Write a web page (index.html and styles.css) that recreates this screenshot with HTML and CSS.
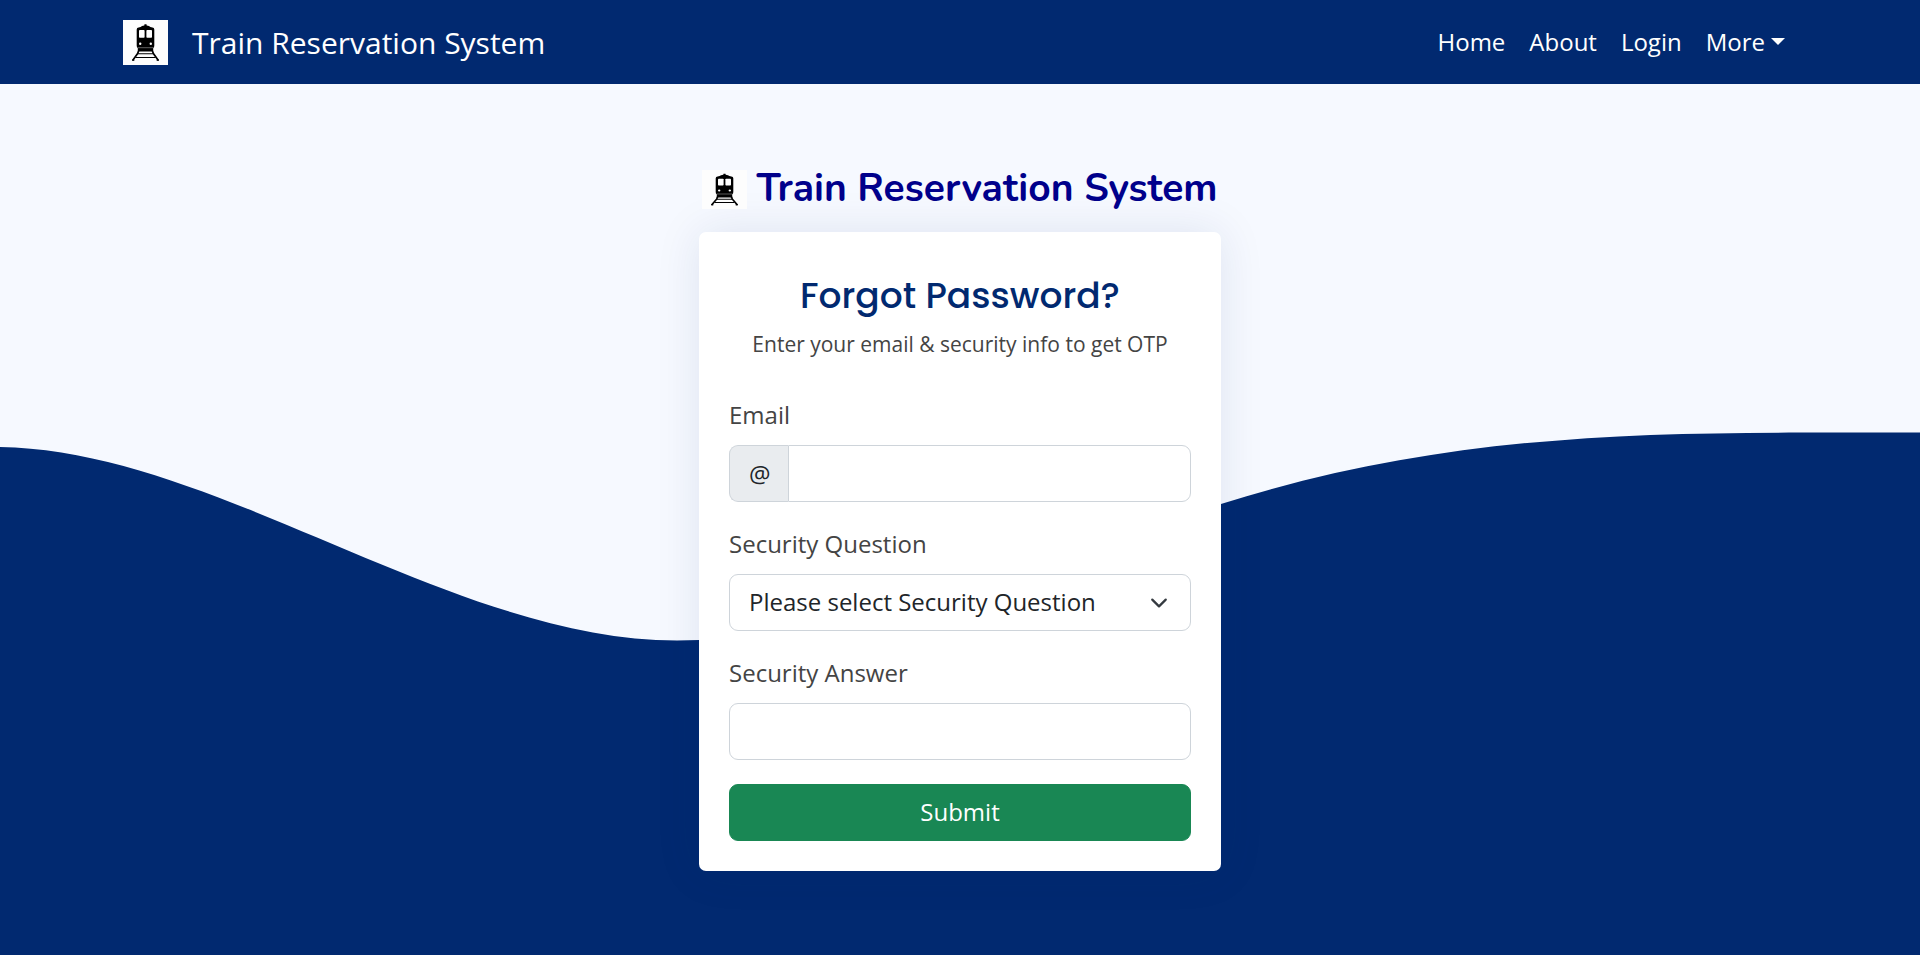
FILE: index.html
```html
<!DOCTYPE html>
<html lang="en">
<head>
  <meta charset="utf-8">
  <meta name="viewport" content="width=device-width, initial-scale=1">
  <title>Train Reservation System</title>
  <link rel="stylesheet" href="styles.css">
</head>
<body>
  <svg class="symbols" aria-hidden="true">
    <symbol id="train" viewBox="0 0 45 45" preserveAspectRatio="none">
      <rect width="45" height="45" fill="#fdfdfd"/>
      <path d="M13.7 9.5 Q13.7 7.8 15.6 7.6 L17.6 7 Q18.6 5.6 21.3 5.4 L21.5 4.3 H23.5 L23.7 5.4 Q26.4 5.6 27.4 7 L29.4 7.6 Q31.3 7.8 31.3 9.5 V25.5 Q31.3 27.6 30.2 28 V31.6 H14.8 V28 Q13.7 27.6 13.7 25.5 Z" fill="#000"/>
      <rect x="16" y="10" width="5.6" height="7.8" rx=".8" fill="#fff"/>
      <rect x="23.4" y="10" width="5.6" height="7.8" rx=".8" fill="#fff"/>
      <circle cx="17.2" cy="23.7" r="1.2" fill="#fff"/>
      <circle cx="27.8" cy="23.7" r="1.2" fill="#fff"/>
      <path d="M14.8 27.7 H30.2" stroke="#777" stroke-width=".8"/>
      <path d="M15.6 31 L14.6 33.6 L9.6 40.4 M29.4 31 L30.4 33.6 L35.4 40.4" fill="none" stroke="#000" stroke-width="1.7"/>
      <path d="M9 40.2 H11.4 M33.6 40.2 H36" stroke="#000" stroke-width="1"/>
      <path d="M15 33.8 H30 M12.5 37.5 H32.5" stroke="#000" stroke-width="1.1"/>
    </symbol>
  </svg>

  <header class="navbar">
    <div class="navbar-inner">
      <a class="brand" href="#">
        <svg class="brand-logo" role="img" aria-label="Train"><use href="#train"/></svg>
        <span>Train Reservation System</span>
      </a>
      <nav class="nav">
        <a href="#">Home</a>
        <a href="#">About</a>
        <a href="#">Login</a>
        <button class="nav-more" type="button" aria-haspopup="true">More<span class="caret"></span></button>
      </nav>
    </div>
  </header>

  <main class="page">
    <svg class="wave" viewBox="0 0 1920 871" preserveAspectRatio="none" aria-hidden="true">
      <path d="M0 363 C215 366 452 556.5 677 556.5 C880 556.5 1020 482 1221 420 C1421 357 1600 348.6 1800 348.6 H1920 V871 H0 Z"/>
    </svg>
    <div class="content">
      <a class="logo" href="#">
        <svg class="logo-icon" role="img" aria-label="Train"><use href="#train"/></svg>
        <span>Train Reservation System</span>
      </a>
      <section class="card">
        <h1 class="card-title">Forgot Password?</h1>
        <p class="card-text">Enter your email &amp; security info to get OTP</p>
        <form class="form">
          <div class="field">
            <label for="email">Email</label>
            <div class="input-group">
              <span class="addon">@</span>
              <input class="control" type="email" id="email">
            </div>
          </div>
          <div class="field">
            <label for="question">Security Question</label>
            <select class="control select" id="question">
              <option>Please select Security Question</option>
            </select>
          </div>
          <div class="field">
            <label for="answer">Security Answer</label>
            <input class="control" type="text" id="answer">
          </div>
          <button class="submit" type="submit">Submit</button>
        </form>
      </section>
    </div>
  </main>
</body>
</html>
```
FILE: styles.css
```css
* {
  box-sizing: border-box;
}

body {
  margin: 0;
  min-height: 100vh;
  display: flex;
  flex-direction: column;
  background: #f6f9ff;
  color: #444;
  font-family: "Open Sans", sans-serif;
  font-size: 24px;
}

a {
  color: inherit;
  text-decoration: none;
}

.symbols {
  position: absolute;
  width: 0;
  height: 0;
}

/* Navigation bar */
.navbar {
  background: #012970;
  color: #fff;
  padding: 20px 24px 19px;
}

.navbar-inner {
  max-width: 1674px;
  margin: 0 auto;
  display: flex;
  align-items: center;
  justify-content: space-between;
}

.brand {
  display: flex;
  align-items: center;
  gap: 24px;
  font-size: 30px;
  line-height: 45px;
}

.brand-logo {
  width: 45px;
  height: 45px;
}

.nav {
  display: flex;
  align-items: center;
  gap: 24px;
  padding: 0 12px 2px 0;
  line-height: 36px;
}

.nav-more {
  display: flex;
  align-items: center;
  gap: 6px;
  padding: 0;
  border: 0;
  background: none;
  color: inherit;
  font: inherit;
  line-height: 36px;
}

.caret {
  border: 7px solid transparent;
  border-top-color: #fff;
  border-bottom: 0;
}

/* Page body */
.page {
  position: relative;
  flex: 1;
  padding: 79px 24px 84px;
}

.wave {
  position: absolute;
  inset: 0;
  width: 100%;
  height: 100%;
  fill: #012970;
}

.content {
  position: relative;
  max-width: 522px;
  margin: 0 auto;
}

.logo {
  display: flex;
  align-items: center;
  justify-content: center;
  gap: 9px;
  margin-bottom: 17px;
  color: #00008b;
  font-family: Nunito, Lato, sans-serif;
  font-size: 39px;
  font-weight: 700;
  line-height: 52px;
  white-space: nowrap;
}

.logo-icon {
  flex: none;
  width: 45px;
  height: 39px;
}

.card {
  padding: 37px 30px 30px;
  border-radius: 7px;
  background: #fff;
  box-shadow: 0 0 45px rgba(1, 41, 112, 0.1);
}

.card-title {
  margin: 0;
  color: #012970;
  font-family: Poppins, Inter, sans-serif;
  font-size: 36px;
  font-weight: 500;
  line-height: 54px;
  text-align: center;
}

.card-text {
  margin: 5px 0 37px;
  font-size: 21px;
  line-height: 32px;
  text-align: center;
}

.form {
  display: flex;
  flex-direction: column;
  gap: 24px;
}

.field label {
  display: block;
  padding-bottom: 12px;
  line-height: 36px;
}

.input-group {
  display: flex;
}

.addon {
  padding: 10px 17px 10px 19px;
  border: 1px solid #ced4da;
  border-right: 0;
  border-radius: 9px 0 0 9px;
  background: #e9ecef;
  color: #212529;
  line-height: 35px;
}

.control {
  display: block;
  width: 100%;
  min-width: 0;
  height: 57px;
  padding: 9px 19px 11px;
  border: 1px solid #ced4da;
  border-radius: 9px;
  background: #fff;
  color: #212529;
  font: inherit;
  line-height: 35px;
}

.input-group .control {
  border-radius: 0 9px 9px 0;
}

.select {
  appearance: none;
  background: #fff url("data:image/svg+xml,%3Csvg xmlns='http://www.w3.org/2000/svg' viewBox='0 0 16 16'%3E%3Cpath fill='none' stroke='%23343a40' stroke-linecap='round' stroke-linejoin='round' stroke-width='2' d='m2 5 6 6 6-6'/%3E%3C/svg%3E") no-repeat right 22px center / 18px 18px;
}

.submit {
  padding: 9px 19px 11px;
  border: 1px solid #198754;
  border-radius: 9px;
  background: #198754;
  color: #fff;
  font: inherit;
  line-height: 35px;
}
```
